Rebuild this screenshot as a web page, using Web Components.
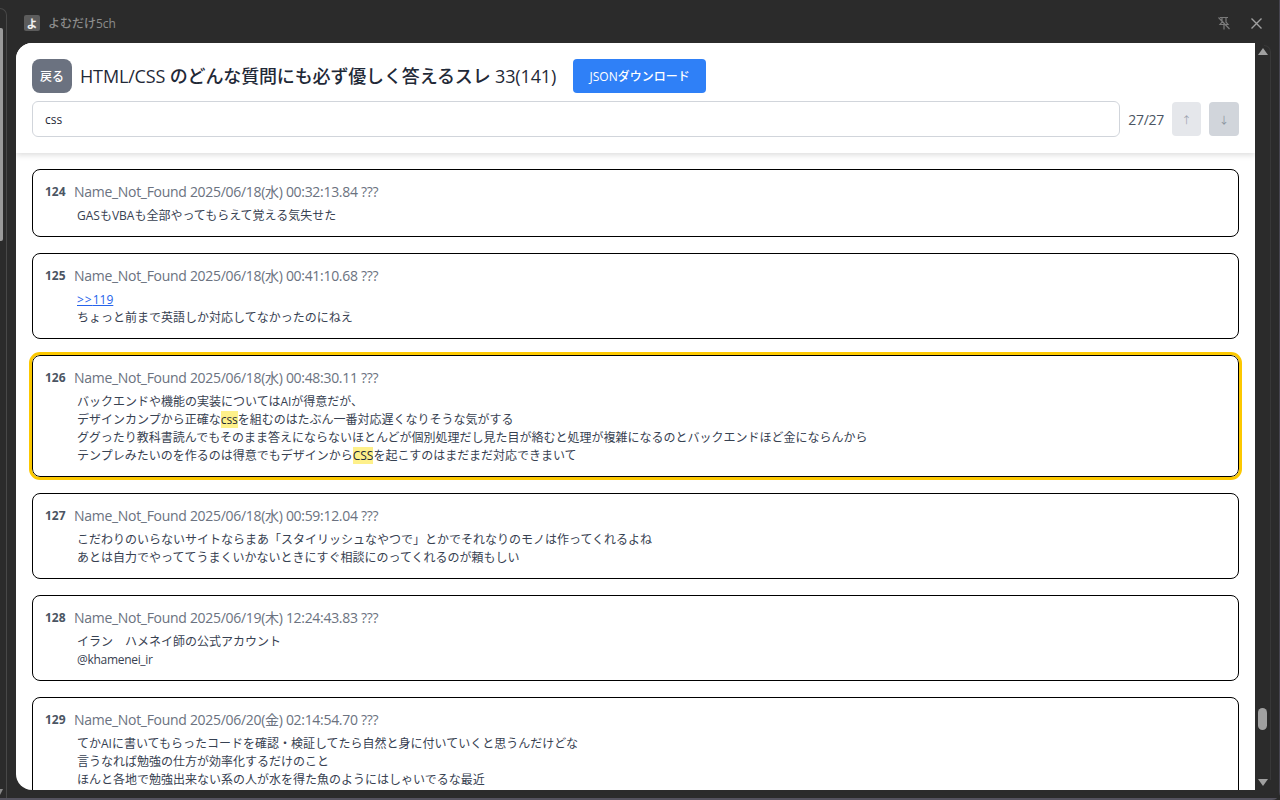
<!DOCTYPE html>
<html lang="ja">
<head>
<meta charset="utf-8">
<title>よむだけ5ch</title>
<style>
    html, body { margin: 0; height: 100%; overflow: hidden; background: #2b2b2b; }
    body { font-family: "Open Sans", "Noto Sans CJK JP", sans-serif; }
</style>
</head>
<body>
<app-window>
    <thread-header slot="header" title-text="HTML/CSS のどんな質問にも必ず優しく答えるスレ 33(141)" query="css" count="27/27"></thread-header>
    <post-card num="124" meta="Name_Not_Found 2025/06/18(水) 00:32:13.84 ???">GASもVBAも全部やってもらえて覚える気失せた</post-card>
    <post-card num="125" meta="Name_Not_Found 2025/06/18(水) 00:41:10.68 ???"><a href="#119"><span style="letter-spacing:1px">&gt;&gt;</span>119</a><br>ちょっと前まで英語しか対応してなかったのにねえ</post-card>
    <post-card num="126" meta="Name_Not_Found 2025/06/18(水) 00:48:30.11 ???" current>バックエンドや機能の実装についてはAIが得意だが、<br>デザインカンプから正確な<mark>css</mark>を組むのはたぶん一番対応遅くなりそうな気がする<br>ググったり教科書読んでもそのまま答えにならないほとんどが個別処理だし見た目が絡むと処理が複雑になるのとバックエンドほど金にならんから<br>テンプレみたいのを作るのは得意でもデザインから<mark>CSS</mark>を起こすのはまだまだ対応できまいて</post-card>
    <post-card num="127" meta="Name_Not_Found 2025/06/18(水) 00:59:12.04 ???">こだわりのいらないサイトならまあ「スタイリッシュなやつで」とかでそれなりのモノは作ってくれるよね<br>あとは自力でやっててうまくいかないときにすぐ相談にのってくれるのが頼もしい</post-card>
    <post-card num="128" meta="Name_Not_Found 2025/06/19(木) 12:24:43.83 ???">イラン　ハメネイ師の公式アカウント<br><span style="letter-spacing:-0.3px">@khamenei_ir</span></post-card>
    <post-card num="129" meta="Name_Not_Found 2025/06/20(金) 02:14:54.70 ???">てかAIに書いてもらったコードを確認・検証してたら自然と身に付いていくと思うんだけどな<br>言うなれば勉強の仕方が効率化するだけのこと<br>ほんと各地で勉強出来ない系の人が水を得た魚のようにはしゃいでるな最近</post-card>
</app-window>

<script>
// window frame
class AppWindow extends HTMLElement {
    constructor() {
        super();
        this.attachShadow({ mode: 'open' });
    }

    connectedCallback() {
        this.shadowRoot.innerHTML = `
            <style>
                :host {
                    display: flex;
                    flex-direction: column;
                    height: 800px;
                    position: relative;
                    background: #2b2b2b;
                    color: #374151;
                    border-radius: 0 0 8px 0;
                    overflow: hidden;
                }
                .titlebar {
                    height: 43px;
                    box-sizing: border-box;
                    padding: 3px 18px 0 24px;
                    flex: none;
                    display: flex;
                    align-items: center;
                    color: #8c8c8c;
                    font-size: 12px;
                    font-weight: 500;
                }
                .app-icon {
                    width: 16px;
                    height: 16px;
                    margin-right: 8px;
                    border-radius: 2px;
                    background: #5c5c5c;
                    color: #f0f0f0;
                    font-size: 11px;
                    font-weight: 700;
                    display: flex;
                    align-items: center;
                    justify-content: center;
                }
                .tools { margin-left: auto; display: flex; gap: 20px; align-items: center; }
                .tools svg { display: block; }
                .body { flex: 1; min-height: 0; display: flex; padding-bottom: 10px; }
                .edge { width: 16px; flex: none; }
                .panel {
                    flex: 1;
                    min-width: 0;
                    background: #fff;
                    border-radius: 16px 0 0 16px;
                    overflow: hidden;
                    display: flex;
                    flex-direction: column;
                }
                .list {
                    flex: 1;
                    min-height: 0;
                    overflow: hidden;
                    padding: 16px 16px 0;
                    display: flex;
                    flex-direction: column;
                    gap: 16px;
                }
                .scrollbar {
                    width: 25px;
                    box-sizing: border-box;
                    padding-left: 3px;
                    flex: none;
                    display: flex;
                    flex-direction: column;
                    align-items: flex-start;
                    position: relative;
                }
                .arrow { width: 0; height: 0; border-left: 5px solid transparent; border-right: 5px solid transparent; }
                .arrow.up { margin-top: 5px; border-bottom: 7px solid #a0a0a0; }
                .arrow.down { margin-top: auto; margin-bottom: 4px; border-top: 7px solid #a0a0a0; }
                .thumb {
                    position: absolute;
                    top: 665px;
                    left: 3px;
                    width: 9px;
                    height: 22px;
                    border-radius: 5px;
                    background: #a0a0a0;
                }
                /* faint track outline next to the arrows */
                .track {
                    position: absolute;
                    top: 2px;
                    right: 9px;
                    bottom: 10px;
                    width: 6px;
                    border-right: 1px solid #383838;
                    border-radius: 0 8px 0 0;
                    border-top: 1px solid #383838;
                }
                /* window behind, on the left edge */
                .behind {
                    position: absolute;
                    left: 0;
                    top: 8px;
                    bottom: 2px;
                    width: 6px;
                    border-right: 1px solid #484848;
                    border-top: 1px solid #484848;
                    border-radius: 0 7px 0 0;
                }
                .behind .bar {
                    position: absolute;
                    left: 0;
                    top: 19px;
                    width: 3px;
                    height: 213px;
                    border-radius: 0 2px 2px 0;
                    background: #9a9a9a;
                }
                .behind .tip {
                    position: absolute;
                    left: 0;
                    bottom: 3px;
                    width: 0;
                    height: 0;
                    border-right: 3px solid transparent;
                    border-top: 6px solid #8a8a8a;
                }
                .bottom-line {
                    position: absolute;
                    left: 0;
                    right: 0;
                    bottom: 0;
                    height: 2px;
                    background: #55535f;
                }
                .right-line {
                    position: absolute;
                    top: 0;
                    right: 0;
                    bottom: 0;
                    width: 1px;
                    background: #46444f;
                }
            </style>
            <div class="titlebar">
                <span class="app-icon">よ</span>
                <span>よむだけ5ch</span>
                <div class="tools">
                    <svg width="14" height="14" viewBox="0 0 14 14" fill="none" stroke="#7a7a7a" stroke-width="1.2">
                        <path d="M3 1.5h8M5 1.5v4.5L3 8.5h8L9 6V1.5M7 8.5v5M1.5 1.5l11 11.5"/>
                    </svg>
                    <svg width="11" height="11" viewBox="0 0 11 11" fill="none" stroke="#a0a0a0" stroke-width="1.4">
                        <path d="M.5.5l10 10M10.5.5l-10 10"/>
                    </svg>
                </div>
            </div>
            <div class="body">
                <div class="edge"></div>
                <div class="panel">
                    <slot name="header"></slot>
                    <div class="list"><slot></slot></div>
                </div>
                <div class="scrollbar">
                    <span class="track"></span>
                    <span class="arrow up"></span>
                    <span class="thumb"></span>
                    <span class="arrow down"></span>
                </div>
            </div>
            <div class="behind"><span class="bar"></span><span class="tip"></span></div>
            <div class="bottom-line"></div>
            <div class="right-line"></div>
        `;
    }
}

// header with title and search
class ThreadHeader extends HTMLElement {
    constructor() {
        super();
        this.attachShadow({ mode: 'open' });
    }

    connectedCallback() {
        this.shadowRoot.innerHTML = `
            <style>
                :host {
                    display: block;
                    flex: none;
                    position: relative;
                    z-index: 1;
                    height: 110px;
                    box-sizing: border-box;
                    padding: 16px 16px 0;
                    background: #fff;
                    box-shadow: 0 2px 6px rgba(0,0,0,0.14);
                }
                .row { display: flex; align-items: center; }
                .back {
                    width: 40px;
                    height: 34px;
                    border-radius: 8px;
                    background: #6b7280;
                    color: #fff;
                    font-size: 12px;
                    font-weight: 500;
                    display: flex;
                    align-items: center;
                    justify-content: center;
                    margin-right: 8px;
                }
                h1 {
                    margin: 0 17px 0 0;
                    font-size: 18px;
                    font-weight: 500;
                    letter-spacing: -0.15px;
                    color: #1f2937;
                    line-height: 34px;
                    white-space: nowrap;
                }
                .json {
                    width: 133px;
                    height: 34px;
                    border-radius: 4px;
                    background: #2f80f7;
                    color: #fff;
                    font-size: 12px;
                    font-weight: 500;
                    display: flex;
                    align-items: center;
                    justify-content: center;
                }
                .search { margin-top: 8px; }
                .field {
                    flex: 1;
                    height: 36px;
                    box-sizing: border-box;
                    border: 1px solid #d1d5db;
                    border-radius: 6px;
                    padding: 0 12px;
                    font-size: 12px;
                    line-height: 35px;
                    color: #1f2937;
                }
                .count { margin: 0 8px; font-size: 14px; letter-spacing: -0.3px; color: #4b5563; }
                .nav {
                    width: 29px;
                    height: 34px;
                    border-radius: 4px;
                    background: #e5e7eb;
                    color: #9ca3af;
                    font-size: 10px;
                    display: flex;
                    align-items: center;
                    justify-content: center;
                }
                .nav + .nav { width: 30px; margin-left: 8px; background: #d1d5db; color: #8b93a0; }
            </style>
            <div class="row">
                <div class="back">戻る</div>
                <h1>${this.getAttribute('title-text')}</h1>
                <div class="json">JSONダウンロード</div>
            </div>
            <div class="row search">
                <div class="field">${this.getAttribute('query')}</div>
                <span class="count">${this.getAttribute('count')}</span>
                <div class="nav">↑</div>
                <div class="nav">↓</div>
            </div>
        `;
    }
}

// one post
const postTemplate = document.createElement('template');
postTemplate.innerHTML = `
    <style>
        :host {
            display: block;
            flex: none;
            box-sizing: border-box;
            padding: 11px 12px 11px;
            border: 1px solid #000;
            border-radius: 8px;
            background: #fff;
        }
        :host([current]) { outline: 3px solid #fcc800; outline-offset: 0; }
        .head { display: flex; align-items: center; line-height: 22px; }
        .num { width: 29px; font-size: 12px; font-weight: 700; color: #4b5563; }
        .meta { font-size: 14px; letter-spacing: -0.3px; color: #6b7280; }
        .text { margin: 4px 0 0 32px; font-size: 12px; line-height: 18px; color: #374151; }
        ::slotted(a) { color: #2563eb; text-decoration: underline; }
        ::slotted(mark) { background: #fef08a; color: #1f2937; }
    </style>
    <div class="head"><span class="num"></span><span class="meta"></span></div>
    <div class="text"><slot></slot></div>
`;

class PostCard extends HTMLElement {
    constructor() {
        super();
        this.attachShadow({ mode: 'open' });
        this.shadowRoot.appendChild(postTemplate.content.cloneNode(true));
    }

    connectedCallback() {
        this.shadowRoot.querySelector('.num').textContent = this.getAttribute('num');
        this.shadowRoot.querySelector('.meta').textContent = this.getAttribute('meta');
    }
}

customElements.define('app-window', AppWindow);
customElements.define('thread-header', ThreadHeader);
customElements.define('post-card', PostCard);
</script>
</body>
</html>
